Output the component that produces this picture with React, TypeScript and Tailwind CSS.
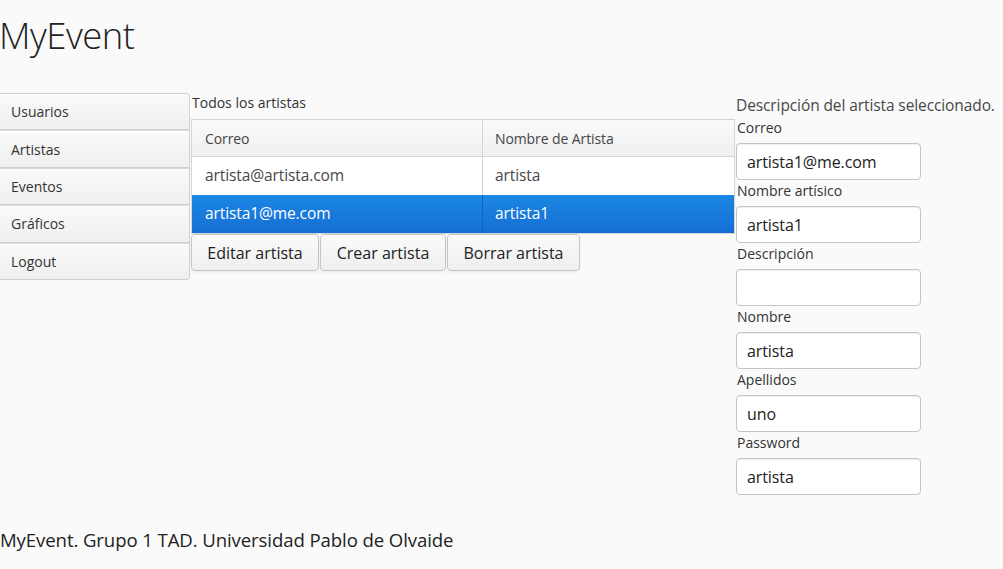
import React from "react";

const navItems = ["Usuarios", "Artistas", "Eventos", "Gráficos", "Logout"];
const fields: [string, string][] = [
  ["Correo", "artista1@me.com"],
  ["Nombre artísico", "artista1"],
  ["Descripción", ""],
  ["Nombre", "artista"],
  ["Apellidos", "uno"],
  ["Password", "artista"],
];

export default function App() {
  return (
    <div
      className="w-[1003px] h-[569px] bg-[#fafafa] text-[#474747] overflow-hidden"
      style={{ fontFamily: '"Open Sans", "DejaVu Sans", sans-serif' }}
    >
      <div className="h-[93px] pt-[8px]">
        <h1 className="text-[36.5px] font-light leading-[54px] text-[#222] tracking-[-0.5px] -ml-[1px]">MyEvent</h1>
      </div>
      <div className="flex h-[427px]">
        <div className="w-[190px] flex flex-col">
          {navItems.map((n, i) => (
            <div
              key={n}
              className={`h-[37.4px] flex items-center pl-[11px] text-[14px] text-[#333] border border-l-0 border-[#d0d0d0] bg-gradient-to-b from-[#fafafa] to-[#efefef] ${i === 0 ? "rounded-tr-[4px]" : "border-t-[#dadada]"} ${i === navItems.length - 1 ? "rounded-br-[4px]" : ""} shadow-[inset_0_1px_0_#fff]`}
            >
              {n}
            </div>
          ))}
        </div>
        <div className="w-[545px] pl-[1px]">
          <div className="h-[26px] pl-[1px] text-[14px] leading-[20px] text-[#333]">Todos los artistas</div>
          <div className="border border-[#d4d4d4] bg-white">
            <div className="flex h-[37px] bg-gradient-to-b from-[#fafafa] to-[#efefef] border-b border-[#d4d4d4] text-[14px] text-[#464646] tracking-[-0.1px]">
              <div className="w-[291px] flex items-center pl-[13px] border-r border-[#d4d4d4]">Correo</div>
              <div className="flex-1 flex items-center pl-[12px]">Nombre de Artista</div>
            </div>
            <div className="flex h-[38px] text-[15.5px] text-[#474747] bg-white tracking-[-0.1px]">
              <div className="w-[291px] flex items-center pl-[13px] border-r border-[#d4d4d4]">artista@artista.com</div>
              <div className="flex-1 flex items-center pl-[12px]">artista</div>
            </div>
            <div className="flex h-[38px] text-[15.5px] text-white bg-gradient-to-b from-[#1b87e3] to-[#166ed5] tracking-[-0.1px]">
              <div className="w-[291px] flex items-center pl-[13px] border-r border-[#1560b8]">artista1@me.com</div>
              <div className="flex-1 flex items-center pl-[12px]">artista1</div>
            </div>
          </div>
          <div className="flex gap-[1px] mt-0">
            {[["Editar artista", 128], ["Crear artista", 126], ["Borrar artista", 133]].map(([t, w]) => (
              <div
                key={t as string}
                style={{ width: w as number }}
                className="h-[37px] flex items-center justify-center text-[16px] text-[#222] border border-[#c5c5c5] rounded-[4px] bg-gradient-to-b from-[#fafafa] to-[#efefef] shadow-[inset_0_1px_0_#fff,0_2px_3px_rgba(0,0,0,0.05)]"
              >
                {t}
              </div>
            ))}
          </div>
        </div>
        <div className="pl-[1px] w-[267px]">
          <div className="h-[25px] text-[15.5px] leading-[24px] text-[#474747] whitespace-nowrap tracking-[-0.1px]">Descripción del artista seleccionado.</div>
          {fields.map(([l, v]) => (
            <div key={l}>
              <div className="h-[25px] pl-[1px] text-[14px] leading-[20px] text-[#333]">{l}</div>
              <div className="w-[185px] h-[37px] border border-[#c5c5c5] rounded-[4px] bg-white flex items-center pl-[10px] text-[16px] text-[#222] shadow-[inset_0_1px_0_#f0f0f0] mb-[1px] tracking-[-0.1px]">
                {v}
              </div>
            </div>
          ))}
        </div>
      </div>
      <div className="text-[18.6px] leading-[26px] text-[#222] mt-[7px] tracking-[-0.1px]">MyEvent. Grupo 1 TAD. Universidad Pablo de Olvaide</div>
    </div>
  );
}
